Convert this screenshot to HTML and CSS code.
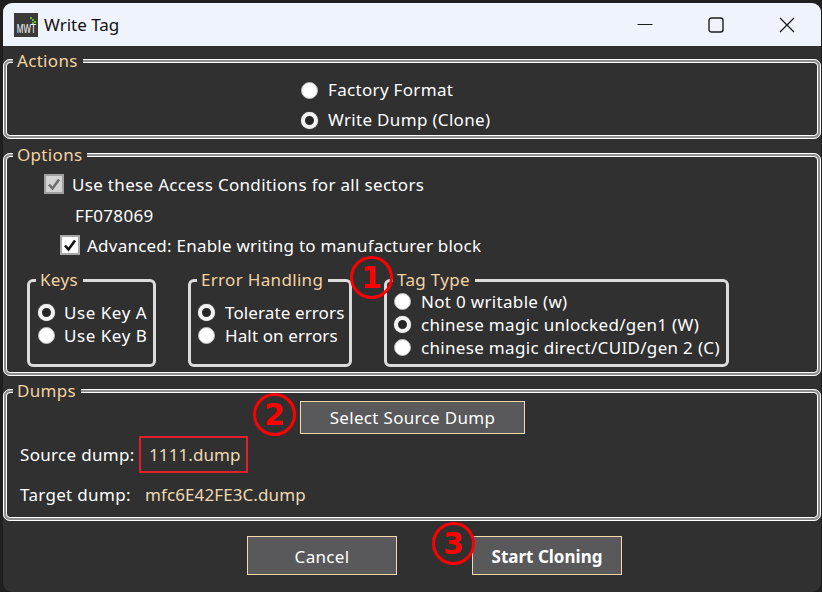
FILE: index.html
```html
<!DOCTYPE html>
<html lang="en">
<head>
<meta charset="utf-8">
<title>Write Tag</title>
<link rel="stylesheet" href="styles.css">
</head>
<body>
<div class="window">
  <header class="titlebar">
    <div class="logo">
      <svg class="logo-dots" width="8" height="9" viewBox="0 0 8 9"><path d="M1 1h2v2H1zM3 3h2v2H3zM5 5h2v2H5zM3 6h2v2H3z" fill="#5fb830"/></svg>
      <span class="logo-text">MWT</span>
    </div>
    <span class="title">Write Tag</span>
    <div class="controls">
      <svg class="ctl" width="16" height="16" viewBox="0 0 16 16"><path d="M0.5 7.5h15" stroke="#1c1c1c" stroke-width="1.2" fill="none"/></svg>
      <svg class="ctl" width="16" height="16" viewBox="0 0 16 16"><rect x="1" y="1" width="14" height="14" rx="2.5" stroke="#1c1c1c" stroke-width="1.4" fill="none"/></svg>
      <svg class="ctl" width="16" height="16" viewBox="0 0 16 16"><path d="M1 1l14 14M15 1L1 15" stroke="#1c1c1c" stroke-width="1.3" fill="none"/></svg>
    </div>
  </header>

  <main class="content">
    <fieldset class="group actions">
      <legend>Actions</legend>
      <div class="inner">
        <div class="opt"><span class="radio"></span>Factory Format</div>
        <div class="opt"><span class="radio on"></span>Write Dump (Clone)</div>
      </div>
    </fieldset>

    <fieldset class="group options">
      <legend>Options</legend>
      <div class="inner">
        <div class="check-row"><span class="check off"><svg width="14" height="14" viewBox="0 0 14 14"><path d="M2 7.5l3.5 4L12 2.5" stroke="#6e6e6e" stroke-width="2.6" fill="none"/></svg></span>Use these Access Conditions for all sectors</div>
        <div class="code">FF078069</div>
        <div class="check-row adv"><span class="check"><svg width="14" height="14" viewBox="0 0 14 14"><path d="M2 7.5l3.5 4L12 2.5" stroke="#111" stroke-width="2.6" fill="none"/></svg></span>Advanced: Enable writing to manufacturer block</div>
        <div class="subgroups">
          <fieldset class="group sub keys">
            <legend>Keys</legend>
            <div class="inner">
              <div class="opt"><span class="radio on"></span>Use Key A</div>
              <div class="opt"><span class="radio"></span>Use Key B</div>
            </div>
          </fieldset>
          <fieldset class="group sub errors">
            <legend>Error Handling</legend>
            <div class="inner">
              <div class="opt"><span class="radio on"></span>Tolerate errors</div>
              <div class="opt"><span class="radio"></span>Halt on errors</div>
            </div>
          </fieldset>
          <fieldset class="group sub tagtype">
            <legend>Tag Type</legend>
            <div class="inner">
              <div class="opt"><span class="radio"></span>Not 0 writable (w)</div>
              <div class="opt"><span class="radio on"></span>chinese magic unlocked/gen1 (W)</div>
              <div class="opt"><span class="radio"></span>chinese magic direct/CUID/gen 2 (C)</div>
            </div>
          </fieldset>
        </div>
      </div>
    </fieldset>

    <fieldset class="group dumps">
      <legend>Dumps</legend>
      <div class="inner">
        <button class="btn select">Select Source Dump</button>
        <div class="dump-row source"><span class="label">Source dump:</span><span class="value boxed">1111.dump</span></div>
        <div class="dump-row target"><span class="label">Target dump:</span><span class="value">mfc6E42FE3C.dump</span></div>
      </div>
    </fieldset>

    <footer class="footer">
      <button class="btn cancel">Cancel</button>
      <button class="btn start">Start Cloning</button>
    </footer>
  </main>

  <span class="badge b1">1</span>
  <span class="badge b2">2</span>
  <span class="badge b3">3</span>
</div>
</body>
</html>
```
FILE: styles.css
```css
* { box-sizing: border-box; }
html, body { margin: 0; height: 100%; }
body {
  background: #1f1f1f;
  font-family: "Noto Sans", "Open Sans", sans-serif;
  font-size: 17px;
  letter-spacing: 0.32px;
  color: #fff;
  overflow: hidden;
}
.window {
  position: relative;
  margin: 3px 1px 0 3px;
  height: 589px;
  background: #303030;
  border-radius: 9px;
  display: flex;
  flex-direction: column;
  overflow: hidden;
}
.titlebar {
  height: 43px;
  flex: none;
  background: #eff3fb;
  color: #111;
  display: flex;
  align-items: center;
  padding-left: 11px;
}
.logo {
  width: 24px;
  height: 24px;
  background: #3a3a3a;
  position: relative;
  display: flex;
  align-items: flex-end;
  justify-content: center;
}
.logo-dots { position: absolute; top: 3px; right: 1px; }
.logo-text {
  font-family: "Liberation Sans", sans-serif;
  font-size: 12px;
  letter-spacing: 0;
  line-height: 15px;
  color: #fff;
  transform: scaleX(0.66);
}
.title { margin-left: 6px; font-size: 17px; letter-spacing: 0; }
.controls {
  margin-left: auto;
  display: flex;
  gap: 55px;
  padding-right: 26px;
}
.content {
  flex: 1;
  display: flex;
  flex-direction: column;
}
.group {
  margin: 0;
  min-width: 0;
  padding: 0;
  border: 4px double #fff;
  border-radius: 7px;
  background: linear-gradient(#303030, #303030) padding-box, #8e8e8e border-box;
}
.group legend {
  margin-left: 6px;
  padding: 0 5px 0 4px;
  color: #f3d3a0;
  line-height: 22px;
  background: #303030;
}
.opt {
  display: flex;
  align-items: center;
  line-height: 23px;
}
.radio {
  flex: none;
  width: 17px;
  height: 17px;
  border-radius: 50%;
  background: #fff;
  border: 1px solid #bbb;
  margin-right: 9px;
}
.radio.on {
  background: #252525;
  border: 4px solid #f2f2f2;
  box-shadow: 0 0 1px #aaa;
}
.actions { height: 89px; margin-top: 4px; }
.actions .inner { padding: 3px 0 0 294px; }
.actions .opt { line-height: 30px; }
.actions .radio { margin-right: 10px; }
.options { height: 232px; margin-top: 5px; }
.options > .inner { padding: 6px 0 0 37px; }
.check-row {
  display: flex;
  align-items: center;
  height: 24px;
}
.check {
  flex: none;
  width: 20px;
  height: 20px;
  margin-right: 8px;
  background: #fff;
  border: 2px solid #a8a8a8;
  display: flex;
  align-items: center;
  justify-content: center;
}
.check.off { background: #d4d4d4; border-color: #a0a0a0; }
.code { margin: 8px 0 0 31px; line-height: 23px; }
.adv { margin: 6px 0 0 16px; letter-spacing: 0.23px; }
.adv .check { margin-right: 7px; }
.subgroups {
  display: flex;
  align-items: flex-start;
  margin: 12px 0 0 -17px;
}
.sub { border: 3px solid #dcdcdc; border-radius: 6px; background: none; height: 98px; }
.sub legend { margin-left: 6px; padding: 0 5px 0 4px; }
.keys { width: 129px; }
.keys .inner { padding: 10px 0 0 8px; letter-spacing: 0.55px; }
.errors { width: 164px; margin-left: 32px; }
.errors .inner { padding: 10px 0 0 7px; letter-spacing: 0.12px; }
.errors .radio { margin-right: 10px; }
.tagtype { width: 345px; margin-left: 32px; }
.tagtype .inner { padding-left: 7px; margin-top: -1px; }
.tagtype .radio { margin-right: 10px; }
.dumps { height: 141px; margin-top: 4px; }
.dumps .inner { padding-left: 13px; margin-top: -1px; }
.btn {
  display: block;
  font: inherit;
  letter-spacing: inherit;
  color: #fff;
  background: #59595b;
  border: 1px solid #f5d9a8;
  padding: 0;
}
.select { width: 225px; height: 33px; margin-left: 280px; }
.dump-row { display: flex; align-items: center; }
.source { margin-top: 2px; height: 37px; }
.target { margin-top: 1px; height: 40px; }
.source .label { width: 119px; }
.target .label { width: 125px; }
.value { color: #efd9b4; letter-spacing: 0.1px; }
.boxed {
  height: 37px;
  width: 109px;
  border: 2px solid #e0202c;
  display: flex;
  align-items: center;
  padding-left: 8px;
}
.footer {
  display: flex;
  gap: 75px;
  padding: 15px 0 0 244px;
}
.cancel, .start { width: 150px; height: 39px; padding-top: 1px; }
.start { font-weight: 700; letter-spacing: 0; }
.badge {
  position: absolute;
  width: 43px;
  height: 43px;
  border: 3px solid #f00;
  border-radius: 50%;
  color: #f00;
  font-family: "DejaVu Sans", sans-serif;
  font-weight: 700;
  font-size: 30px;
  letter-spacing: 0;
  display: flex;
  align-items: center;
  justify-content: center;
}
.b1 { left: 347px; top: 253px; }
.b2 { left: 250px; top: 390px; }
.b3 { left: 429px; top: 519px; }
```
